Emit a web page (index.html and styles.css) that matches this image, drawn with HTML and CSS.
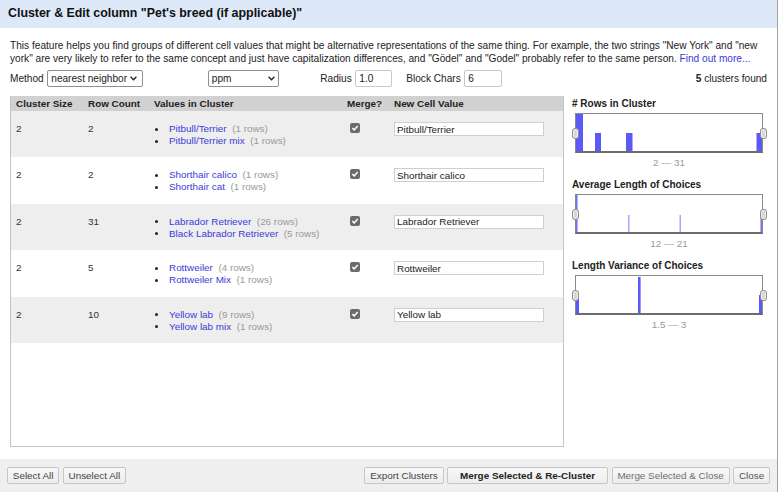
FILE: index.html
```html
<!DOCTYPE html>
<html>
<head>
<meta charset="utf-8">
<title>Cluster &amp; Edit</title>
<link rel="stylesheet" href="styles.css">
</head>
<body>
<div class="dialog">
  <div class="dlg-header">Cluster &amp; Edit column "Pet's breed (if applicable)"</div>
  <div class="dlg-body">
    <p class="intro">This feature helps you find groups of different cell values that might be alternative representations of the same thing. For example, the two strings "New York" and "new york" are very likely to refer to the same concept and just have capitalization differences, and "Gödel" and "Godel" probably refer to the same person. <a href="#">Find out more...</a></p>
    <div class="controls">
      <label class="ctl">Method<span class="selwrap"><select class="sel sel-method"><option>nearest neighbor</option></select><svg class="chev chev-method" width="7" height="5" viewBox="0 0 7 5"><path d="M0.6 0.8 L3.5 3.8 L6.4 0.8" fill="none" stroke="#222" stroke-width="1.3"/></svg></span></label>
      <span class="selwrap selwrap-func"><select class="sel sel-func"><option>ppm</option></select><svg class="chev chev-func" width="7" height="5" viewBox="0 0 7 5"><path d="M0.6 0.8 L3.5 3.8 L6.4 0.8" fill="none" stroke="#222" stroke-width="1.3"/></svg></span>
      <label class="ctl ctl-radius">Radius<input class="txt txt-radius" value="1.0"></label>
      <label class="ctl ctl-block">Block Chars<input class="txt txt-block" value="6"></label>
      <div class="found"><b>5</b> clusters found</div>
    </div>
    <div class="main">
      <div class="table-wrap">
        <table class="clusters">
          <colgroup>
            <col class="c1"><col class="c2"><col class="c3"><col class="c4"><col class="c5">
          </colgroup>
          <thead>
            <tr><th>Cluster Size</th><th>Row Count</th><th>Values in Cluster</th><th>Merge?</th><th>New Cell Value</th></tr>
          </thead>
          <tbody>
            <tr class="odd">
              <td>2</td><td>2</td>
              <td><ul class="vals"><li><a href="#">Pitbull/Terrier</a><span class="cnt">(1 rows)</span></li><li><a href="#">Pitbull/Terrier mix</a><span class="cnt">(1 rows)</span></li></ul></td>
              <td><span class="chk"><svg width="10" height="10" viewBox="0 0 10 10"><rect width="10" height="10" rx="2" fill="#6b6b6b"/><path d="M2.4 5.1 L4.2 6.9 L7.7 3.1" fill="none" stroke="#fff" stroke-width="1.5"/></svg></span></td>
              <td><input class="cell-input" value="Pitbull/Terrier"></td>
            </tr>
            <tr class="even">
              <td>2</td><td>2</td>
              <td><ul class="vals"><li><a href="#">Shorthair calico</a><span class="cnt">(1 rows)</span></li><li><a href="#">Shorthair cat</a><span class="cnt">(1 rows)</span></li></ul></td>
              <td><span class="chk"><svg width="10" height="10" viewBox="0 0 10 10"><rect width="10" height="10" rx="2" fill="#6b6b6b"/><path d="M2.4 5.1 L4.2 6.9 L7.7 3.1" fill="none" stroke="#fff" stroke-width="1.5"/></svg></span></td>
              <td><input class="cell-input" value="Shorthair calico"></td>
            </tr>
            <tr class="odd">
              <td>2</td><td>31</td>
              <td><ul class="vals"><li><a href="#">Labrador Retriever</a><span class="cnt">(26 rows)</span></li><li><a href="#">Black Labrador Retriever</a><span class="cnt">(5 rows)</span></li></ul></td>
              <td><span class="chk"><svg width="10" height="10" viewBox="0 0 10 10"><rect width="10" height="10" rx="2" fill="#6b6b6b"/><path d="M2.4 5.1 L4.2 6.9 L7.7 3.1" fill="none" stroke="#fff" stroke-width="1.5"/></svg></span></td>
              <td><input class="cell-input" value="Labrador Retriever"></td>
            </tr>
            <tr class="even">
              <td>2</td><td>5</td>
              <td><ul class="vals"><li><a href="#">Rottweiler</a><span class="cnt">(4 rows)</span></li><li><a href="#">Rottweiler Mix</a><span class="cnt">(1 rows)</span></li></ul></td>
              <td><span class="chk"><svg width="10" height="10" viewBox="0 0 10 10"><rect width="10" height="10" rx="2" fill="#6b6b6b"/><path d="M2.4 5.1 L4.2 6.9 L7.7 3.1" fill="none" stroke="#fff" stroke-width="1.5"/></svg></span></td>
              <td><input class="cell-input" value="Rottweiler"></td>
            </tr>
            <tr class="odd">
              <td>2</td><td>10</td>
              <td><ul class="vals"><li><a href="#">Yellow lab</a><span class="cnt">(9 rows)</span></li><li><a href="#">Yellow lab mix</a><span class="cnt">(1 rows)</span></li></ul></td>
              <td><span class="chk"><svg width="10" height="10" viewBox="0 0 10 10"><rect width="10" height="10" rx="2" fill="#6b6b6b"/><path d="M2.4 5.1 L4.2 6.9 L7.7 3.1" fill="none" stroke="#fff" stroke-width="1.5"/></svg></span></td>
              <td><input class="cell-input" value="Yellow lab"></td>
            </tr>
          </tbody>
        </table>
      </div>
      <div class="facets">
        <div class="facet">
          <div class="facet-title"># Rows in Cluster</div>
          <div class="hist">
            <svg width="186" height="37" viewBox="0 0 186 37">
              <rect x="0" y="0" width="7" height="37" fill="#5a5af8"/>
              <rect x="19" y="19" width="6" height="18" fill="#5a5af8"/>
              <rect x="50" y="19" width="6.5" height="18" fill="#5a5af8"/>
              <rect x="180.5" y="19" width="5.5" height="18" fill="#5a5af8"/>
            </svg>
            <span class="handle handle-l"></span><span class="handle handle-r"></span>
          </div>
          <div class="facet-range">2 — 31</div>
        </div>
        <div class="facet">
          <div class="facet-title">Average Length of Choices</div>
          <div class="hist">
            <svg width="186" height="37" viewBox="0 0 186 37">
              <rect x="0" y="0" width="1.5" height="37" fill="#6f6ff8"/>
              <rect x="52" y="20" width="1.5" height="17" fill="#a8a8ff"/>
              <rect x="103.5" y="20" width="1.5" height="17" fill="#a8a8ff"/>
              <rect x="184.5" y="20" width="1.5" height="17" fill="#6f6ff8"/>
            </svg>
            <span class="handle handle-l"></span><span class="handle handle-r"></span>
          </div>
          <div class="facet-range">12 — 21</div>
        </div>
        <div class="facet">
          <div class="facet-title">Length Variance of Choices</div>
          <div class="hist">
            <svg width="186" height="37" viewBox="0 0 186 37">
              <rect x="0" y="19" width="3" height="18" fill="#5a5af8"/>
              <rect x="62" y="1" width="2.6" height="36" fill="#5a5af8"/>
              <rect x="183" y="19" width="3" height="18" fill="#5a5af8"/>
            </svg>
            <span class="handle handle-l"></span><span class="handle handle-r"></span>
          </div>
          <div class="facet-range">1.5 — 3</div>
        </div>
      </div>
    </div>
  </div>
  <div class="footer">
    <button class="btn">Select All</button>
    <button class="btn">Unselect All</button>
    <button class="btn btn-push">Export Clusters</button>
    <button class="btn btn-primary">Merge Selected &amp; Re-Cluster</button>
    <button class="btn btn-soft">Merge Selected &amp; Close</button>
    <button class="btn btn-close">Close</button>
  </div>
</div>
</body>
</html>
```
FILE: styles.css
```css
* { box-sizing: border-box; }

html, body {
  margin: 0;
  padding: 0;
  background: #fff;
}

body {
  font-family: "Liberation Sans", Arial, sans-serif;
  font-size: 9.9px;
  color: #222;
}

.dialog {
  width: 778px;
  height: 492px;
  border-right: 1px solid #a3a3a3;
  display: flex;
  flex-direction: column;
}

.dlg-header {
  height: 28px;
  background: #dde8f8;
  padding-left: 8px;
  font-size: 12.4px;
  font-weight: bold;
  line-height: 27px;
  color: #111;
}

.dlg-body {
  flex: 1;
  padding: 0 10px;
}

.intro {
  margin: 10.5px 0 0;
  line-height: 13px;
  font-size: 10.15px;
  color: #222;
}

.intro a {
  color: #3b3bd6;
  text-decoration: none;
}

.controls {
  display: flex;
  align-items: center;
  height: 17px;
  margin-top: 5.5px;
  font-size: 10.1px;
}

.ctl {
  display: flex;
  align-items: center;
  gap: 3.6px;
}

.selwrap {
  position: relative;
  display: block;
  height: 17px;
}

.sel {
  -webkit-appearance: none;
  appearance: none;
  display: block;
  font-family: "Liberation Sans", Arial, sans-serif;
  font-size: 10.1px;
  color: #222;
  height: 17px;
  padding: 0 0 0 3px;
  border: 1px solid #8f8f8f;
  border-radius: 2px;
  background: #fff;
}

.chev {
  position: absolute;
  top: 6px;
  pointer-events: none;
}

.chev-method { right: 6px; }
.chev-func { right: 4px; }

.sel-method { width: 96px; }

.sel-func { width: 71px; }

.selwrap-func { margin-left: 64.5px; }

.ctl-radius { margin-left: 41.5px; }
.ctl-block { margin-left: 14px; }

.txt {
  font-family: "Liberation Sans", Arial, sans-serif;
  font-size: 10.1px;
  color: #222;
  height: 17px;
  border: 1px solid #c8c8c8;
  border-radius: 2px;
  padding: 0 3px;
  background: #fff;
}

.txt-radius { width: 37px; }
.txt-block { width: 38px; }

.found { margin-left: auto; }

.main {
  display: flex;
  margin-top: 9px;
}

.table-wrap {
  width: 554px;
  height: 351px;
  border: 1px solid #c4c4c4;
  border-top: none;
  flex: none;
}

.clusters {
  width: 552px;
  table-layout: fixed;
  border-collapse: collapse;
}

.c1 { width: 72px; }
.c2 { width: 66px; }
.c3 { width: 193px; }
.c4 { width: 47px; }
.c5 { width: 174px; }

.clusters th {
  background: #d1d1d1;
  height: 15px;
  line-height: 15px;
  padding: 0 5px;
  text-align: left;
  font-weight: bold;
  color: #222;
  white-space: nowrap;
}

.clusters td {
  vertical-align: top;
  padding: 12px 5px 10.4px;
  line-height: 12px;
  color: #333;
}

.clusters tr.odd td { background: #eeeeee; }
.clusters tr.even td { background: #ffffff; }

.vals {
  list-style: none;
  margin: 0;
  padding: 0 0 0 1px;
  white-space: nowrap;
}

.vals li {
  display: flex;
  align-items: center;
}

.vals li::before {
  content: "";
  width: 3px;
  height: 3px;
  border-radius: 50%;
  background: #222;
  margin-right: 11px;
  flex: none;
}

.vals a {
  color: #3b3bd6;
  text-decoration: none;
}

.cnt {
  color: #999;
  margin-left: 5.5px;
}

.chk {
  display: block;
  width: 10px;
  height: 10px;
  margin: 0 0 0 3px;
}

.chk svg { display: block; }

.cell-input {
  display: block;
  width: 150px;
  height: 14px;
  margin-top: -1px;
  border: 1px solid #cfcfcf;
  padding: 0 2px;
  font-family: "Liberation Sans", Arial, sans-serif;
  font-size: 9.9px;
  color: #222;
  background: #fff;
}

.facets {
  flex: 1;
  padding: 1px 0 0 8px;
}

.facet {
  margin-bottom: 8px;
}

.facet-title {
  font-weight: bold;
  font-size: 10px;
  line-height: 14px;
  color: #222;
}

.hist {
  position: relative;
  box-sizing: content-box;
  width: 186px;
  height: 37px;
  margin: 2px 0 0 3px;
  border: 1px solid #8a8a8a;
  border-bottom: 2px solid #6c6c6c;
}

.hist svg { display: block; }

.handle {
  position: absolute;
  top: 14px;
  width: 7px;
  height: 11px;
  border: 1px solid #8c8c8c;
  border-radius: 3px;
  background: #d6d6d6;
  box-shadow: inset 0 0 0 1px #f2f2f2;
}

.handle-l { left: -4.5px; }
.handle-r { right: -4.5px; }

.facet-range {
  width: 188px;
  margin: 3px 0 0 3px;
  text-align: center;
  color: #999;
  line-height: 14px;
  font-size: 9.9px;
}

.footer {
  height: 33px;
  flex: none;
  background: #efefef;
  display: flex;
  align-items: flex-start;
  gap: 3.5px;
  padding: 8px 7px 0;
}

.btn {
  height: 17px;
  padding: 0 4.8px;
  border: 1px solid #c6c6c6;
  border-radius: 2px;
  background: linear-gradient(#f8f8f8, #ececec);
  font-family: "Liberation Sans", Arial, sans-serif;
  font-size: 9.9px;
  color: #444;
  line-height: 15px;
  white-space: nowrap;
}

.btn-push { margin-left: auto; }

.btn-primary {
  font-weight: bold;
  color: #222;
  padding: 0 12px;
}

.btn-soft { color: #707070; }
.btn-close { color: #555; }
```
